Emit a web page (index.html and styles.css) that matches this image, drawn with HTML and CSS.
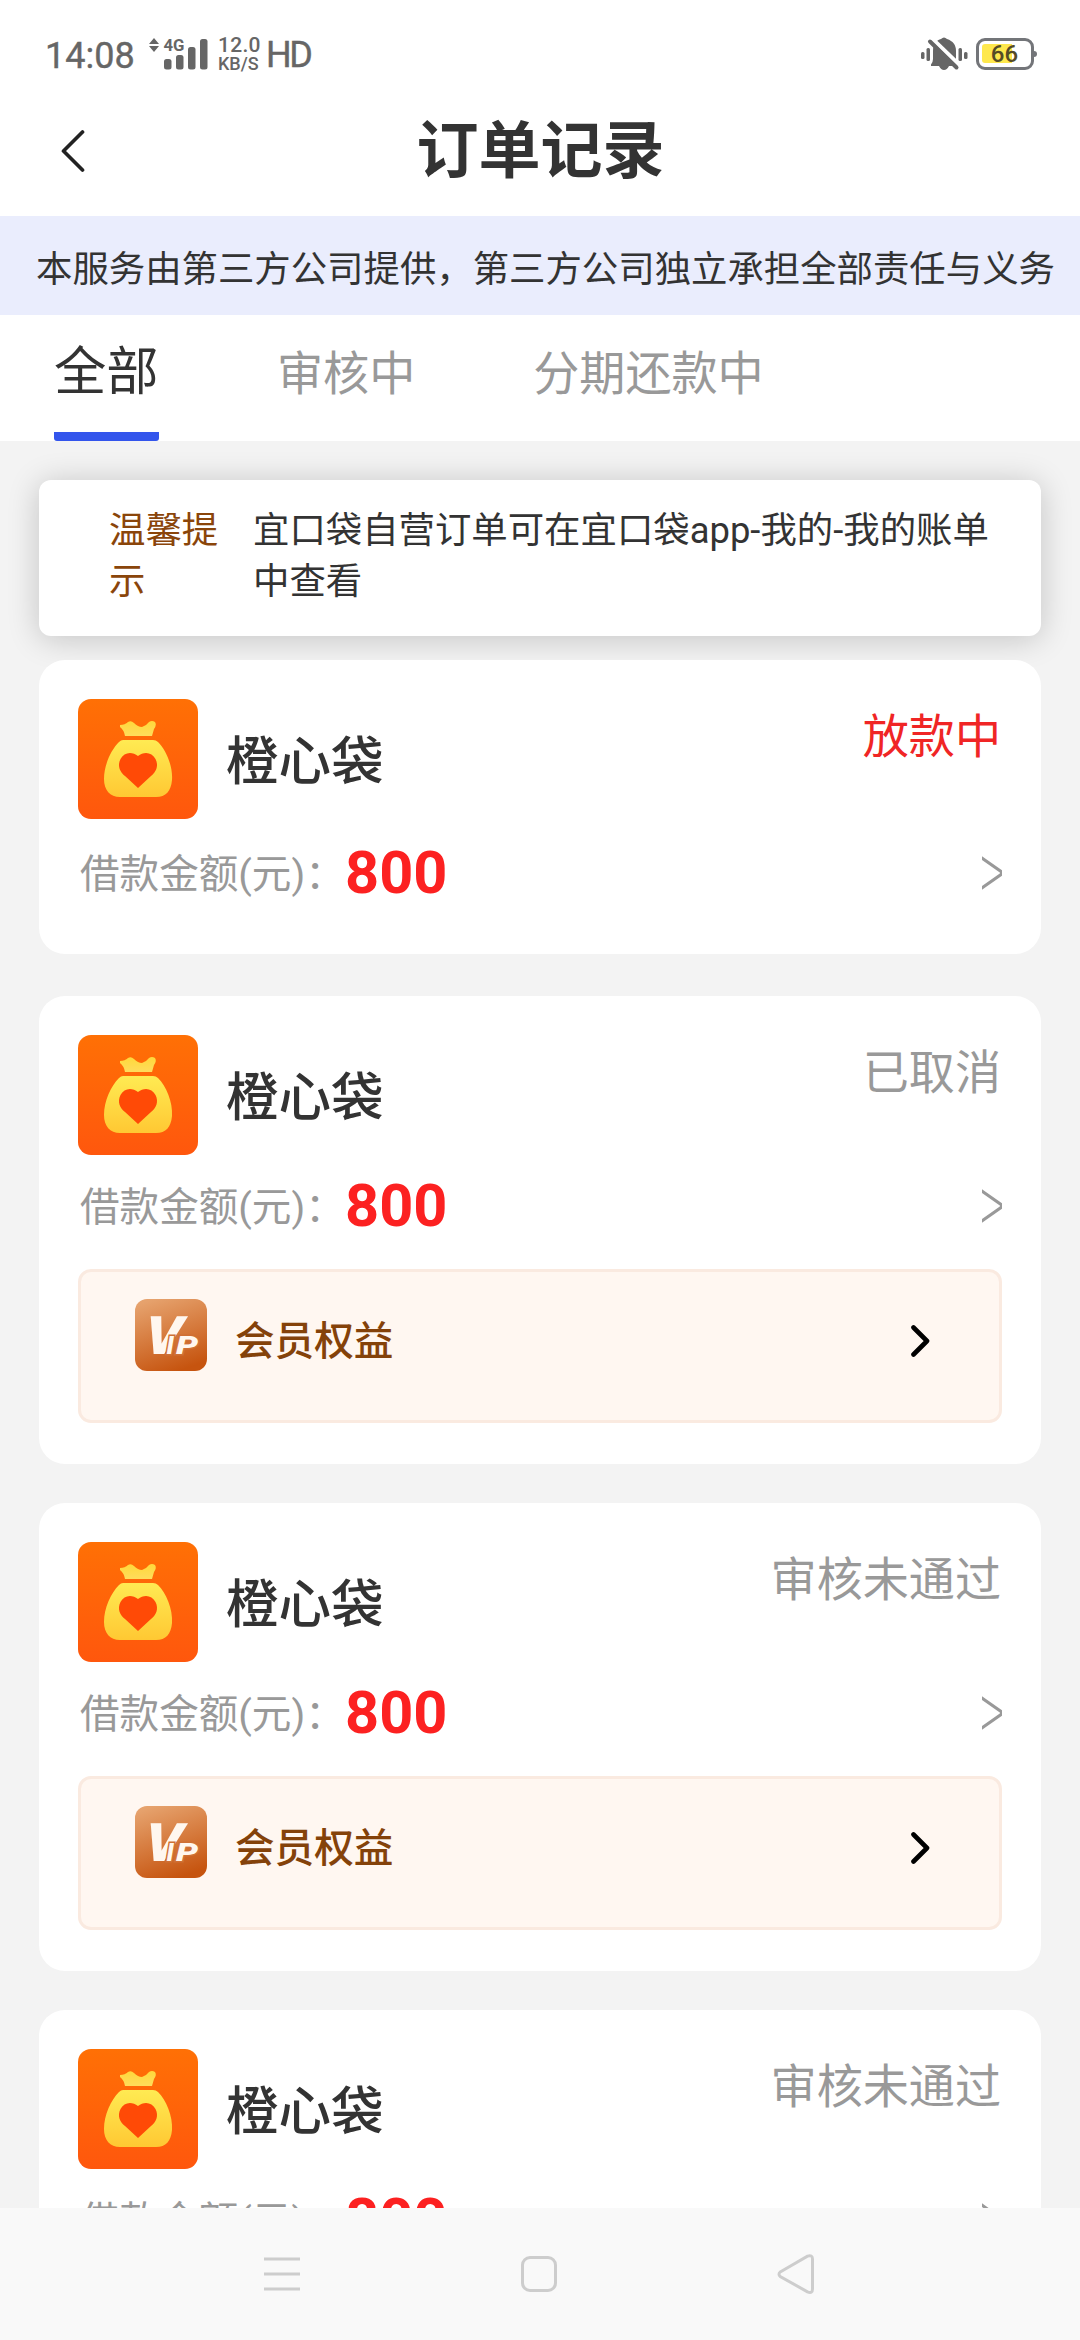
FILE: index.html
```html
<!DOCTYPE html>
<html lang="zh-CN">
<head>
<meta charset="utf-8">
<title>订单记录</title>
<link rel="stylesheet" href="styles.css">
</head>
<body>
<svg class="defs" width="0" height="0" aria-hidden="true">
  <defs>
    <linearGradient id="orange" x1="0" y1="0" x2="0" y2="1"><stop offset="0" stop-color="#ff7005"/><stop offset="1" stop-color="#ff570d"/></linearGradient>
    <linearGradient id="gold" x1="0" y1="22" x2="0" y2="98" gradientUnits="userSpaceOnUse"><stop offset="0" stop-color="#ffd83a"/><stop offset=".2" stop-color="#ffdc5c"/><stop offset=".26" stop-color="#ffea52"/><stop offset="1" stop-color="#ffc833"/></linearGradient>
    <linearGradient id="bronze" x1=".25" y1="0" x2=".6" y2="1"><stop offset="0" stop-color="#e6a26d"/><stop offset="1" stop-color="#c6540f"/></linearGradient>
    <symbol id="bag" viewBox="0 0 120 120">
      <rect width="120" height="120" rx="13" fill="url(#orange)"/>
      <path fill="url(#gold)" d="M42 26Q47 26 50 23Q53 21 56 24Q60 28 64 28Q68 27 71 23Q74 21 77 23Q79 26 76 30L74 37H47Q46 31 42 28ZM45 41H75Q78 41 80 43C88 51 95 67 94 81C93 92 88 98 78 98H42C32 98 26 91 26 80C26 66 33 51 41 43Q43 41 45 41Z"/>
      <path fill="#ff4a06" d="M60 57C54 52 46 53 42.500 60C39 67 42 73 47 77L60 89L73 77C78 73 81 67 77.500 60C74 53 66 52 60 57Z"/>
    </symbol>
    <symbol id="vip" viewBox="0 0 72 72">
      <rect width="72" height="72" rx="12" fill="url(#bronze)"/>
      <text class="vip-v" transform="translate(8 55) skewX(-6)" textLength="37" lengthAdjust="spacingAndGlyphs">V</text>
      <text class="vip-ip" x="31.500" y="55">I</text>
      <text class="vip-ip" x="41" y="55" textLength="22" lengthAdjust="spacingAndGlyphs">P</text>
    </symbol>
    <symbol id="more" viewBox="0 0 20 34"><path d="M-1 1.500L19 15.500Q20 17 19 18.500L-1 32.500" fill="none" stroke="#999" stroke-width="3"/></symbol>
    <symbol id="go" viewBox="0 0 19 32"><path d="M2.500 2.500L16 16L2.500 29.500" fill="none" stroke="#000" stroke-width="4.600" stroke-linecap="round" stroke-linejoin="round"/></symbol>
  </defs>
</svg>
<div class="screen">
  <div class="status">
    <span class="time">14:08</span>
    <svg class="signal" width="60" height="34" viewBox="0 0 60 34" fill="#666">
      <path d="M0 8L5 2L10 8ZM0 10H10L5 16Z"/>
      <text class="net" x="14.500" y="15" textLength="21" lengthAdjust="spacingAndGlyphs">4G</text>
      <rect x="15" y="23" width="7.500" height="10.500" rx="2.500"/><rect x="27" y="19" width="7.500" height="14.500" rx="2.500"/><rect x="39" y="11" width="7.500" height="22.500" rx="2.500"/><rect x="51" y="3" width="7.500" height="30.500" rx="2.500"/>
    </svg>
    <span class="speed"><span class="rate">12.0</span><span class="unit">KB/S</span></span>
    <span class="hd">HD</span>
    <svg class="mute" width="47" height="36" viewBox="0 0 47 36">
      <g fill="#666"><rect x="0" y="16" width="3.500" height="7" rx="1.500"/><rect x="5.500" y="12" width="3.500" height="13" rx="1.500"/><rect x="37.500" y="12" width="3.500" height="13" rx="1.500"/><rect x="43" y="16" width="3.500" height="7" rx="1.500"/>
      <path d="M10 28.500Q12 26 12 23V15C12 7 16 4 20 3Q23 0 26 3C32 5 35 9 35 15V23Q35 26 37 28.500V30H28Q26 34 23 34Q20 34 18 30H10Z"/></g>
      <path d="M11.500 3L38.500 29" stroke="#fff" stroke-width="4"/><path d="M9 5.500L35.500 31.500" stroke="#666" stroke-width="4" stroke-linecap="round"/>
    </svg>
    <span class="battery"><span class="charge">66</span></span>
  </div>
  <header class="head">
    <svg class="back" width="24" height="42" viewBox="0 0 24 42"><path d="M21.500 2L2.500 21L21.500 40" fill="none" stroke="#222" stroke-width="3.700" stroke-linecap="round" stroke-linejoin="round"/></svg>
    <h1 class="title">订单记录</h1>
  </header>
  <div class="notice">本服务由第三方公司提供，第三方公司独立承担全部责任与义务</div>
  <nav class="tabs"><span class="tab active">全部</span><span class="tab">审核中</span><span class="tab">分期还款中</span></nav>
  <main class="list">
    <div class="tip"><span class="tip-label">温馨提示</span><span class="tip-text">宜口袋自营订单可在宜口袋app-我的-我的账单中查看</span></div>
    <section class="card first">
      <div class="top"><svg class="logo"><use href="#bag"/></svg><h2 class="name">橙心袋</h2><span class="state hot">放款中</span></div>
      <div class="amount"><span class="label">借款金额(元)：</span><b class="sum">800</b><svg class="more"><use href="#more"/></svg></div>
    </section>
    <section class="card">
      <div class="top"><svg class="logo"><use href="#bag"/></svg><h2 class="name">橙心袋</h2><span class="state">已取消</span></div>
      <div class="amount"><span class="label">借款金额(元)：</span><b class="sum">800</b><svg class="more"><use href="#more"/></svg></div>
      <div class="member"><svg class="vip"><use href="#vip"/></svg><span class="member-text">会员权益</span><svg class="go"><use href="#go"/></svg></div>
    </section>
    <section class="card">
      <div class="top"><svg class="logo"><use href="#bag"/></svg><h2 class="name">橙心袋</h2><span class="state">审核未通过</span></div>
      <div class="amount"><span class="label">借款金额(元)：</span><b class="sum">800</b><svg class="more"><use href="#more"/></svg></div>
      <div class="member"><svg class="vip"><use href="#vip"/></svg><span class="member-text">会员权益</span><svg class="go"><use href="#go"/></svg></div>
    </section>
    <section class="card">
      <div class="top"><svg class="logo"><use href="#bag"/></svg><h2 class="name">橙心袋</h2><span class="state">审核未通过</span></div>
      <div class="amount"><span class="label">借款金额(元)：</span><b class="sum">800</b><svg class="more"><use href="#more"/></svg></div>
    </section>
  </main>
  <footer class="keys">
    <svg width="40" height="44" viewBox="0 0 40 44"><path d="M2 7H38M2 22H38M2 37H38" stroke="#cdcdcd" stroke-width="3"/></svg>
    <svg width="40" height="44" viewBox="0 0 40 44"><rect x="3.500" y="5.500" width="33" height="33" rx="7.500" fill="none" stroke="#cdcdcd" stroke-width="3"/></svg>
    <svg width="40" height="44" viewBox="0 0 40 44"><path d="M4.200 20L31.500 4.200Q36.500 2.500 36.500 7V37Q36.500 42 31.500 39.800L4.200 24.500Q1.800 22.200 4.200 20Z" fill="none" stroke="#cdcdcd" stroke-width="3"/></svg>
  </footer>
</div>
</body>
</html>
```
FILE: styles.css
```css
* { box-sizing: border-box; }
body { margin: 0; background: #fff; font-family: Roboto, "Noto Sans CJK SC", sans-serif; color: #333; }
h1, h2 { margin: 0; }
svg { display: block; flex: none; }
.defs { position: absolute; }
.screen { width: 1080px; height: 2340px; display: flex; flex-direction: column; overflow: hidden; white-space: nowrap; }
.status { height: 102px; padding: 36px 46px 0 45px; display: flex; align-items: flex-start; color: #666; }
.time { width: 104px; font-size: 36px; line-height: 40px; -webkit-text-stroke: .4px #666; }
.signal { width: 60px; }
.net { font: 700 17px Roboto, sans-serif; }
.speed { width: 48px; margin-left: 9px; display: flex; flex-direction: column; font-weight: 500; }
.rate { font-size: 21px; line-height: 19px; letter-spacing: .3px; }
.unit { font-size: 18px; line-height: 17px; }
.hd { font-size: 36px; line-height: 38px; letter-spacing: -2.500px; -webkit-text-stroke: .4px #666; }
.mute { margin-left: auto; margin-right: 8px; }
.battery { position: relative; width: 58px; height: 32px; margin-top: 2px; padding: 3px; border: 3.500px solid #737579; border-radius: 9px; }
.battery::after { content: ""; position: absolute; right: -6px; top: 10px; width: 4px; height: 6px; border-radius: 0 3px 3px 0; background: #737579; }
.charge { display: block; width: 45px; height: 19px; border-radius: 3px; background: linear-gradient(90deg, #fee84d 30px, transparent 30px); color: #554b26; font-size: 24px; font-weight: 500; line-height: 20px; text-align: center; }
.head { height: 114px; display: flex; align-items: center; }
.back { margin-left: 61px; margin-bottom: 16px; }
.title { flex: 1; margin-right: 84px; margin-bottom: 14px; text-align: center; font-size: 62px; line-height: 90px; font-weight: 700; }
.notice { height: 99px; padding-left: 36px; background: #eaedfd; font-size: 36.400px; line-height: 107px; }
.tabs { height: 126px; padding-left: 54px; display: flex; gap: 118px; background: #fff; color: #999; font-size: 46.080px; line-height: 118px; }
.tab.active { height: 126px; width: 105px; background: linear-gradient(#3355ec, #3355ec) bottom / 105px 9px no-repeat; border-radius: 0 0 3px 3px; color: #333; font-size: 52.300px; line-height: 114px; }
.list { flex: 1; min-height: 0; overflow: hidden; padding: 39px; background: #f3f3f3; }
.tip { height: 156px; padding: 25px 50px 0 70px; display: flex; border-radius: 12px; background: #fff; box-shadow: 0 3px 32px rgba(0, 0, 0, .2); font-size: 36.400px; line-height: 51px; white-space: normal; }
.tip-label { width: 110px; margin-right: 34px; flex: none; color: #8a450a; }
.tip-text { flex: 1; }
.card { position: relative; height: 468px; margin-bottom: 39px; padding: 39px 39px 0; border-radius: 26px; background: #fff; }
.card.first { height: 294px; margin-top: 24px; margin-bottom: 42px; }
.top { height: 120px; display: flex; }
.logo { width: 120px; height: 120px; }
.name { margin-left: 28px; font-size: 52.500px; font-weight: 500; line-height: 126px; }
.state { margin-left: auto; margin-right: 1px; color: #999; font-size: 46.080px; line-height: 77px; }
.state.hot { color: #f02525; }
.amount { height: 102px; display: flex; align-items: center; }
.first .amount { height: 108px; }
.label { width: 267px; padding-left: 2px; padding-bottom: 5px; color: #999; font-size: 39.600px; }
.sum { color: #fc2121; font-size: 59.500px; line-height: 60px; }
.more { width: 20px; height: 34px; margin-left: auto; }
.member { height: 154px; margin-top: 12px; padding: 27px 69px 0 54px; display: flex; border: 3px solid #faeae0; border-radius: 13px; background: #fff7f1; color: #84420a; }
.vip { width: 72px; height: 72px; }
.vip-v { font: italic 900 53px Roboto, sans-serif; fill: #fff7ef; }
.vip-ip { font: italic 900 25px Roboto, sans-serif; fill: #fff7ef; stroke: #cf7035; stroke-width: 3px; paint-order: stroke; }
.member-text { margin-left: 28px; font-size: 39.600px; line-height: 86px; font-weight: 500; }
.go { width: 19px; height: 32px; margin-left: auto; margin-top: 26px; }
.keys { height: 132px; padding: 0 262px; display: flex; align-items: center; justify-content: space-between; background: #f9f9f9; }
.keys svg:last-child { margin-right: 2px; }
```
